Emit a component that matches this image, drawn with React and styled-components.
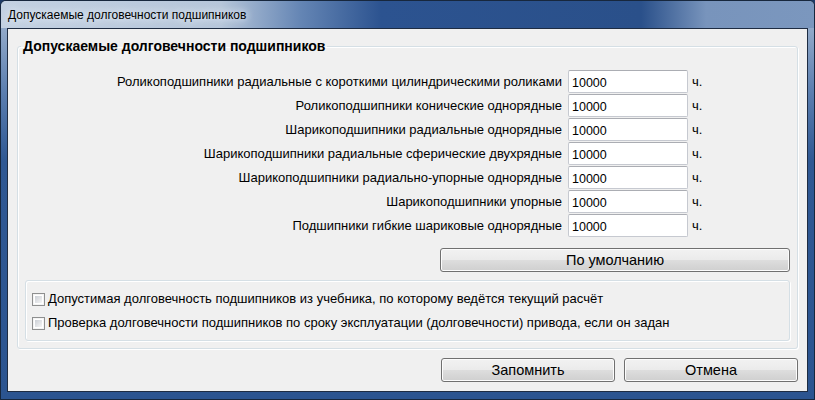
import { Fragment } from "react";
import styled, { createGlobalStyle } from "styled-components";

const GlobalStyle = createGlobalStyle`
  html, body {
    margin: 0;
    padding: 0;
    background: #1d3a66;
  }
  body {
    font-family: "Liberation Sans", Arial, sans-serif;
    font-size: 13px;
    color: #000;
  }
`;

const rows = [
  "Роликоподшипники радиальные с короткими цилиндрическими роликами",
  "Роликоподшипники конические однорядные",
  "Шарикоподшипники радиальные однорядные",
  "Шарикоподшипники радиальные сферические двухрядные",
  "Шарикоподшипники радиально-упорные однорядные",
  "Шарикоподшипники упорные",
  "Подшипники гибкие шариковые однорядные",
];

const Window = styled.div`
  width: 815px;
  height: 400px;
  box-sizing: border-box;
  display: flex;
  flex-direction: column;
  border: 1px solid #17273d;
  border-radius: 6px 6px 0 0;
  background: linear-gradient(180deg, #a9bcd4 0px, #5c7fb0 90px, #2f5893 160px, #2b5490 400px);
  overflow: hidden;
`;

const TitleBar = styled.div`
  height: 27px;
  flex: none;
  display: flex;
  align-items: center;
  padding-left: 7px;
  font-size: 12px;
  background: linear-gradient(
    90deg,
    #c3d1e2 0px,
    #b6c6da 220px,
    #6485b4 300px,
    #2c5390 380px,
    #2a508a 640px,
    #7894bc 705px,
    #7b97be 815px
  );
  span {
    text-shadow: 0 0 6px #e4ecf5, 0 0 10px #e4ecf5;
  }
`;

const Client = styled.div`
  flex: 1;
  margin: 0 6px 7px 6px;
  border: 1px solid #1e2c42;
  background: #f0f0f0;
  display: flex;
  flex-direction: column;
  padding: 0 9px 9px 9px;
`;

const Group = styled.fieldset`
  margin: 9px 0 0 0;
  padding: 0;
  border: 1px solid #d5dfe5;
  border-radius: 3px;
  box-shadow: inset 1px 1px 0 #fff, 1px 1px 0 #fff;
  display: flex;
  flex-direction: column;
`;

const Legend = styled.legend`
  margin-left: 3px;
  padding: 0 2px;
  font-size: 14px;
  font-weight: bold;
  line-height: 16px;
`;

const Form = styled.div`
  display: grid;
  grid-template-columns: 1fr 120px 109px;
  row-gap: 1px;
  margin-top: 16px;
`;

const Label = styled.div`
  text-align: right;
  padding-right: 6px;
  align-self: center;
  white-space: nowrap;
`;

const Field = styled.input`
  box-sizing: border-box;
  width: 120px;
  height: 23px;
  margin: 0;
  padding: 2px 3px 0 3px;
  border: 1px solid #c6c9d0;
  border-top-color: #abadb3;
  border-radius: 2px;
  background: #fff;
  font-family: "Liberation Sans", Arial, sans-serif;
  font-size: 12.5px;
  color: #000;
  outline: none;
`;

const Unit = styled.div`
  padding-left: 4px;
  align-self: center;
`;

const ButtonRow = styled.div`
  display: flex;
  justify-content: flex-end;
  margin: 11px 7px 0 0;
`;

const Button = styled.button`
  box-sizing: border-box;
  width: ${(p) => p.$width}px;
  height: 24px;
  margin: 0;
  padding: 0;
  border: 1px solid #707070;
  border-radius: 3px;
  background: linear-gradient(180deg, #f2f2f2 0%, #ebebeb 48%, #dddddd 52%, #cfcfcf 100%);
  box-shadow: inset 0 0 0 1px #fcfcfc;
  font-family: "Liberation Sans", Arial, sans-serif;
  font-size: 14.5px;
  color: #000;
`;

const InnerGroup = styled.div`
  margin: 8px 7px 7px 7px;
  border: 1px solid #d5dfe5;
  border-radius: 3px;
  box-shadow: inset 1px 1px 0 #fff, 1px 1px 0 #fff;
  padding: 11px 0 10px 6px;
  display: flex;
  flex-direction: column;
  gap: 10px;
`;

const CheckRow = styled.label`
  display: flex;
  align-items: center;
  gap: 3px;
  font-size: 13px;
  line-height: 14px;
  white-space: nowrap;
`;

const Box = styled.span`
  width: 13px;
  height: 13px;
  box-sizing: border-box;
  flex: none;
  border: 1px solid #8e8f8f;
  background: #fff;
  box-shadow: inset 0 0 0 1px #f4f4f4;
  display: flex;
  &::after {
    content: "";
    margin: 2px;
    flex: 1;
    background: linear-gradient(135deg, #cbcfd5 0%, #f6f6f6 100%);
  }
`;

const Footer = styled.div`
  margin-top: auto;
  display: flex;
  justify-content: flex-end;
  gap: 9px;
`;

export default function App() {
  return (
    <>
      <GlobalStyle />
      <Window>
        <TitleBar>
          <span>Допускаемые долговечности подшипников</span>
        </TitleBar>
        <Client>
          <Group>
            <Legend>Допускаемые долговечности подшипников</Legend>
            <Form>
              {rows.map((r) => (
                <Fragment key={r}>
                  <Label>{r}</Label>
                  <Field defaultValue="10000" />
                  <Unit>ч.</Unit>
                </Fragment>
              ))}
            </Form>
            <ButtonRow>
              <Button $width={350}>По умолчанию</Button>
            </ButtonRow>
            <InnerGroup>
              <CheckRow>
                <Box />
                Допустимая долговечность подшипников из учебника, по которому ведётся текущий расчёт
              </CheckRow>
              <CheckRow>
                <Box />
                Проверка долговечности подшипников по сроку эксплуатации (долговечности) привода, если он задан
              </CheckRow>
            </InnerGroup>
          </Group>
          <Footer>
            <Button $width={174}>Запомнить</Button>
            <Button $width={174}>Отмена</Button>
          </Footer>
        </Client>
      </Window>
    </>
  );
}
